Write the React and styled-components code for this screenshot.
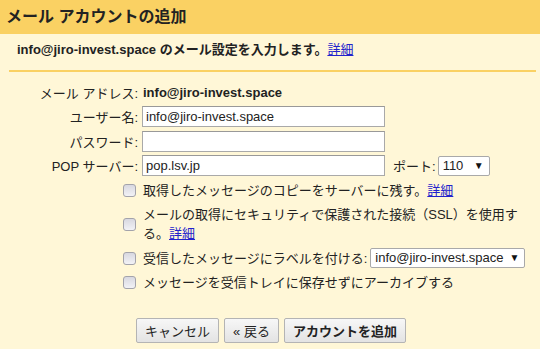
import styled, { createGlobalStyle } from 'styled-components'

const GlobalStyle = createGlobalStyle`
  html, body {
    margin: 0;
    padding: 0;
    background: #fff7d7;
  }
  body {
    font-family: Arial, 'Liberation Sans', 'Noto Sans CJK JP', sans-serif;
    font-size: 13px;
    color: #222;
  }
`

const Page = styled.div`
  width: 540px;
  height: 349px;
  overflow: hidden;
  background: #fff7d7;
`

const TitleBar = styled.div`
  height: 34px;
  line-height: 34px;
  padding-left: 6px;
  background: #fad163;
  font-size: 16px;
  font-weight: bold;
  color: #222;
`

const Intro = styled.div`
  margin: 0 4px 0 9px;
  padding: 8px 8px 12px;
  line-height: 16px;
  font-weight: bold;
  border-bottom: 2px solid #fad163;
`

const Link = styled.a`
  color: #2222cc;
  text-decoration: underline;
  font-weight: normal;
  cursor: pointer;
`

const Form = styled.div`
  display: flex;
  flex-direction: column;
  gap: 3.5px;
  padding-top: 9.5px;
`

const FieldRow = styled.div`
  display: flex;
  align-items: center;
  height: 21px;
`

const Label = styled.div`
  width: 138px;
  text-align: right;
  flex-shrink: 0;
`

const Value = styled.div`
  margin-left: 5px;
  font-weight: bold;
`

const TextInput = styled.input`
  box-sizing: border-box;
  margin: 0 0 0 4px;
  width: 243px;
  height: 21px;
  padding: 0 3px;
  border: 1px solid #a9a9a9;
  border-top-color: #999;
  background: #fff;
  font-family: inherit;
  font-size: 13px;
  color: #222;
  outline: none;
`

const PortLabel = styled.span`
  margin-left: 8px;
  margin-right: 2px;
`

const SelectBox = styled.div`
  box-sizing: border-box;
  display: flex;
  align-items: center;
  justify-content: space-between;
  width: ${(p) => p.$width}px;
  height: 20px;
  padding: 0 5px 0 4px;
  border: 1px solid #a9a9a9;
  border-radius: 2px;
  background: #fff;
  font-size: 13px;
  line-height: 18px;
`

const Arrow = styled.span`
  font-size: 10px;
  color: #111;
`

const OptionRow = styled.div`
  display: flex;
  align-items: center;
  min-height: 21px;
  padding: ${(p) => (p.$tall ? '1px 0' : '0')};
  margin-left: 123px;
`

const Check = styled.span`
  box-sizing: border-box;
  flex-shrink: 0;
  width: 13px;
  height: 13px;
  border: 1px solid #a3a3ab;
  border-radius: 3px;
  background: linear-gradient(#d8d8e0, #f2f2f6);
  margin-right: 7px;
`

const OptionText = styled.div`
  line-height: 19px;
  max-width: 380px;
`

const LabelPick = styled.span`
  margin-left: 3px;
`

const Buttons = styled.div`
  display: flex;
  justify-content: center;
  gap: 5px;
  margin-top: 25px;
  padding-left: 2px;
`

const Button = styled.button`
  box-sizing: border-box;
  height: 25px;
  padding: 0 8px;
  border: 1px solid #b4b4b4;
  border-radius: 2px;
  background: linear-gradient(#f7f7f7, #e3e3e3);
  font-family: inherit;
  font-size: 13px;
  font-weight: ${(p) => (p.$primary ? 'bold' : 'normal')};
  color: #222;
`

const App = () => (
  <Page>
    <GlobalStyle />
    <TitleBar>メール アカウントの追加</TitleBar>
    <Intro>
      info@jiro-invest.space のメール設定を入力します。<Link>詳細</Link>
    </Intro>
    <Form>
      <FieldRow>
        <Label>メール アドレス:</Label>
        <Value>info@jiro-invest.space</Value>
      </FieldRow>
      <FieldRow>
        <Label>ユーザー名:</Label>
        <TextInput defaultValue='info@jiro-invest.space' />
      </FieldRow>
      <FieldRow>
        <Label>パスワード:</Label>
        <TextInput type='password' defaultValue='' />
      </FieldRow>
      <FieldRow>
        <Label>POP サーバー:</Label>
        <TextInput defaultValue='pop.lsv.jp' />
        <PortLabel>ポート:</PortLabel>
        <SelectBox $width={52}>
          <span>110</span>
          <Arrow>▼</Arrow>
        </SelectBox>
      </FieldRow>
      <OptionRow>
        <Check />
        <OptionText>
          取得したメッセージのコピーをサーバーに残す。<Link>詳細</Link>
        </OptionText>
      </OptionRow>
      <OptionRow $tall>
        <Check />
        <OptionText>
          メールの取得にセキュリティで保護された接続（SSL）を使用する。<Link>詳細</Link>
        </OptionText>
      </OptionRow>
      <OptionRow>
        <Check />
        <OptionText>受信したメッセージにラベルを付ける:</OptionText>
        <LabelPick>
          <SelectBox $width={155}>
            <span>info@jiro-invest.space</span>
            <Arrow>▼</Arrow>
          </SelectBox>
        </LabelPick>
      </OptionRow>
      <OptionRow>
        <Check />
        <OptionText>メッセージを受信トレイに保存せずにアーカイブする</OptionText>
      </OptionRow>
    </Form>
    <Buttons>
      <Button>キャンセル</Button>
      <Button>« 戻る</Button>
      <Button $primary>アカウントを追加</Button>
    </Buttons>
  </Page>
)

export default App
